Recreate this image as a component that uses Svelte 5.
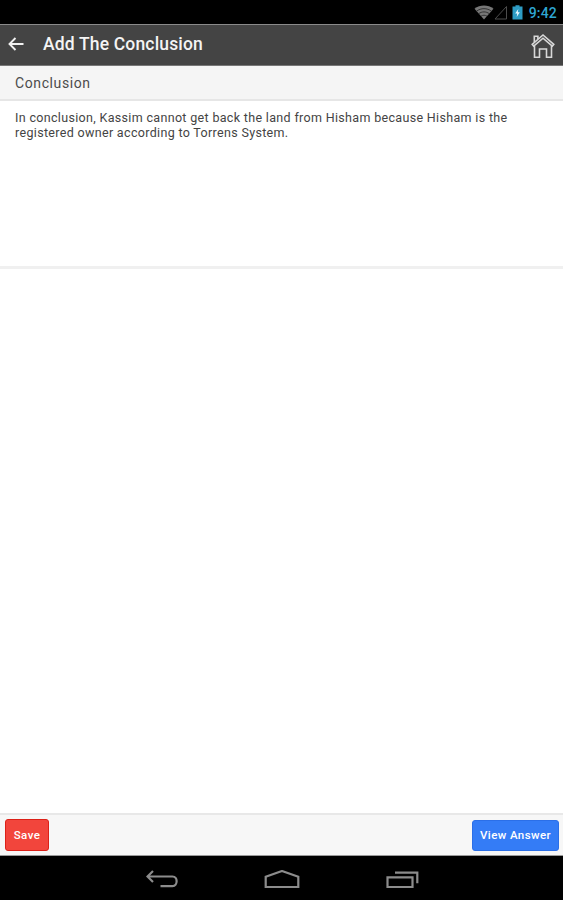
<script lang="ts">
  let answer = $state(
    'In conclusion, Kassim cannot get back the land from Hisham because Hisham is the registered owner according to Torrens System.'
  );
  const time = '9:42';
</script>

<div class="screen">
  <div class="status-bar">
    <svg width="20" height="15" viewBox="0 0 20 15">
      <path d="M0.5 3.8C6-0.6 14-0.6 19.5 3.8L10 14.5z" fill="#777" />
      <path d="M2.5 6.2c4.5-3.4 10.5-3.4 15 0M4.7 8.7c3.2-2.4 7.4-2.4 10.6 0M7 11.2c1.8-1.3 4.2-1.3 6 0" fill="none" stroke="#222" stroke-width="0.8" />
    </svg>
    <svg width="14" height="15" viewBox="0 0 14 15">
      <path d="M12.5 1.5V14H1z" fill="none" stroke="#4c4c4c" stroke-width="1" />
    </svg>
    <svg class="battery" width="11" height="15" viewBox="0 0 11 15">
      <path d="M3.5 0.3h4v1.2h3v13H0.5v-13h3z" fill="#2e9cc4" />
      <path d="M6.3 4L3.2 8.5h2L4.7 12l3.1-4.7h-2z" fill="#e8f8ff" />
    </svg>
    <span class="clock">{time}</span>
  </div>

  <header class="header">
    <button type="button" class="icon-btn back" aria-label="Back">
      <svg width="16" height="14" viewBox="0 0 16 14">
        <path d="M15.5 7H2M7.5 1L1.5 7l6 6" fill="none" stroke="#f2f2f2" stroke-width="1.9" />
      </svg>
    </button>
    <h1>Add The Conclusion</h1>
    <button type="button" class="icon-btn home" aria-label="Home">
      <svg width="24" height="26" viewBox="0 0 24 26" fill="none" stroke="#d8d8d8" stroke-width="1.6">
        <path d="M1.2 11.3L12 2l10.8 9.3-1.5 1.9L12 5.2l-9.3 8z" />
        <path d="M3.3 9V3.2h3.6v2.9" />
        <path d="M3.5 12.8v11.5h5v-8.3h7v8.3h5V12.8" />
      </svg>
    </button>
  </header>

  <div class="section-title">Conclusion</div>
  <textarea class="answer" spellcheck="false" aria-label="Conclusion" bind:value={answer}></textarea>

  <main class="content"></main>

  <footer class="footer">
    <button type="button" class="btn save">Save</button>
    <button type="button" class="btn view">View Answer</button>
  </footer>

  <nav class="nav-bar">
    <svg width="32" height="20" viewBox="0 0 32 20">
      <path d="M7 1L1.5 6.5 7 12M2 6.5h24.5c5.5 0 5.5 9.7 0 9.7H14.5" fill="none" stroke="#8c8c8c" stroke-width="2.2" />
    </svg>
    <svg width="36" height="20" viewBox="0 0 36 20">
      <path d="M1.7 17V6.8L18 1l16.3 5.8V17z" fill="none" stroke="#8c8c8c" stroke-width="2.2" />
    </svg>
    <svg width="34" height="20" viewBox="0 0 34 20">
      <path d="M1.5 7.3h25V17h-25zM9 2.7h22.3v10.5" fill="none" stroke="#8c8c8c" stroke-width="2.2" />
    </svg>
  </nav>
</div>

<style>
  :global(body) {
    margin: 0;
    background: #fff;
  }
  .screen {
    display: flex;
    flex-direction: column;
    height: 900px;
    font-family: Roboto, 'Liberation Sans', sans-serif;
    background: #fff;
    overflow: hidden;
  }
  button {
    font-family: inherit;
    cursor: pointer;
  }
  svg {
    display: block;
    flex: none;
  }
  .status-bar {
    box-sizing: border-box;
    height: 24px;
    flex: none;
    display: flex;
    align-items: center;
    justify-content: flex-end;
    padding-right: 6px;
    background: #000;
  }
  .battery {
    margin: 0 6px 0 4px;
  }
  .clock {
    font-size: 14px;
    line-height: 24px;
    font-weight: 500;
    letter-spacing: 0.2px;
    color: #2fa6d2;
    padding-top: 2px;
  }
  .header {
    box-sizing: border-box;
    height: 42px;
    flex: none;
    display: flex;
    align-items: center;
    padding: 0 8px;
    background: #444;
    border-top: 1px solid #8b8b8b;
    border-bottom: 1px solid #777;
  }
  .header h1 {
    margin: 0 auto 0 19px;
    font-size: 17.5px;
    line-height: 22px;
    font-weight: 500;
    letter-spacing: 0.17px;
    color: #f4f4f4;
    padding-bottom: 3px;
  }
  .icon-btn {
    padding: 0;
    border: none;
    background: none;
  }
  .back {
    padding-bottom: 2px;
  }
  .home {
    padding-top: 2px;
  }
  .section-title {
    box-sizing: border-box;
    height: 35px;
    flex: none;
    padding-left: 15px;
    font-size: 14px;
    line-height: 34px;
    letter-spacing: 0.6px;
    color: #4c4c4c;
    background: #f5f5f5;
    border-bottom: 2px solid #e6e6e6;
  }
  .answer {
    box-sizing: border-box;
    display: block;
    width: 100%;
    height: 168px;
    flex: none;
    margin: 0;
    padding: 9px 15px;
    border: none;
    border-bottom: 3px solid #f0f0f0;
    outline: none;
    resize: none;
    background: #fff;
    font-family: inherit;
    font-size: 12.5px;
    line-height: 15px;
    letter-spacing: 0.33px;
    color: #444;
  }
  .content {
    flex: 1;
  }
  .footer {
    box-sizing: border-box;
    height: 43px;
    flex: none;
    display: flex;
    align-items: center;
    justify-content: space-between;
    padding: 0 4px 0 5px;
    background: #f7f7f7;
    border-top: 2px solid #e8e8e8;
    border-bottom: 1px solid #9a9a9a;
  }
  .btn {
    box-sizing: border-box;
    padding: 0;
    border-radius: 3px;
    color: #fff;
    font-size: 11.5px;
    font-weight: 500;
    letter-spacing: 0.4px;
  }
  .save {
    width: 44px;
    height: 32px;
    background: #f2453c;
    border: 1px solid #dc2118;
  }
  .view {
    width: 87px;
    height: 31px;
    background: #347cf6;
    border: 1px solid #2b6fe8;
  }
  .nav-bar {
    box-sizing: border-box;
    height: 44px;
    flex: none;
    display: flex;
    align-items: center;
    justify-content: center;
    gap: 86px;
    padding: 3px 0 0 2px;
    background: #000;
  }
</style>
